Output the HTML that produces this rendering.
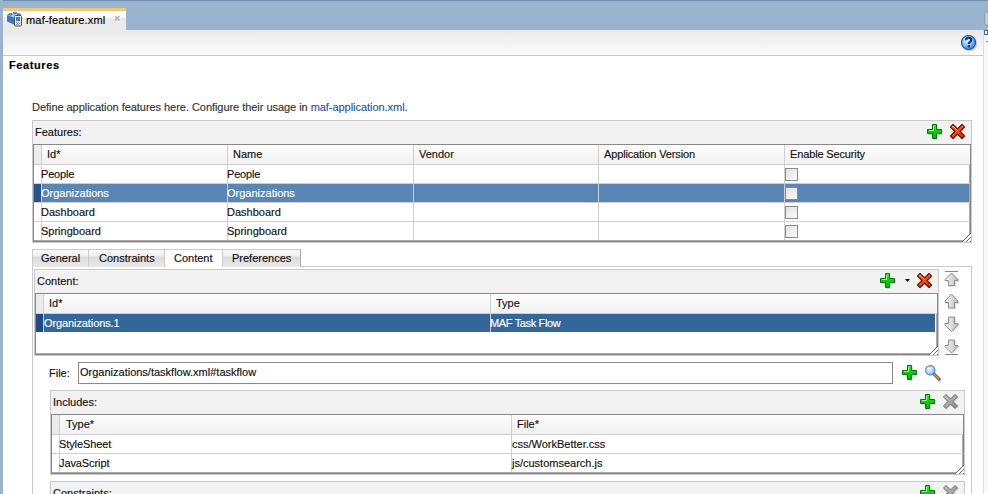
<!DOCTYPE html>
<html><head><meta charset="utf-8">
<style>
*{box-sizing:border-box;margin:0;padding:0}
html,body{width:988px;height:494px;overflow:hidden;background:#fff}
body{position:relative;font-family:"Liberation Sans",sans-serif;font-size:11px;color:#111}
.a{position:absolute}
.t{position:absolute;white-space:nowrap;line-height:13px;height:13px;-webkit-text-stroke:0.15px currentColor}
.t.w{color:#fff}
.hl{background:#c8c8c8}
.dk{background:#8a8a8a}
.gl{background:#cfcfcf}
.cb{width:13px;height:13px;border:1px solid #8a8a8a;background:linear-gradient(135deg,#e2e2e2,#fafafa)}
.tab{height:18px;border:1px solid #cdcdcd;border-right-color:#ababab;border-bottom:none;background:linear-gradient(#f7f7f7 0,#eeeeee 6px,#dcdcdc 7px,#e2e2e2 12px,#e8e8e8 17px)}
</style></head><body>

<!-- top bar -->
<div class="a" style="left:0;top:0;width:988px;height:30px;background:#9ab4cf"></div>
<div class="a" style="left:0;top:0;width:988px;height:1px;background:#7490b0"></div>
<div class="a" style="left:0;top:0;width:3px;height:494px;background:#9ab4cf"></div>

<!-- editor tab -->
<div class="a" style="left:3px;top:8px;width:123px;height:22px;background:linear-gradient(#fff 0,#fff 9px,#ebebeb 10px,#e9e9e9 22px);border-radius:2px 2px 0 0"></div>
<div class="a" style="left:3px;top:8px;width:123px;height:3px;background:#f8c570;border-radius:2px 2px 0 0"></div>
<svg class="a" style="left:6px;top:10px" width="18" height="18" viewBox="0 0 18 18">
  <path d="M1 5 L8 2.5 L15 5 L15 11.5 L8 14.5 L1 11.5 Z" fill="#3b78c4"/>
  <path d="M1 5 L8 7.5 L15 5 L8 2.5 Z" fill="#a8dcf6"/>
  <path d="M8 7.5 L15 5 L15 11.5 L8 14.5Z" fill="#2d64aa"/>
  <ellipse cx="4.5" cy="4.3" rx="1.9" ry="1.3" fill="#3569a8"/>
  <ellipse cx="9" cy="3" rx="1.9" ry="1.3" fill="#3569a8"/>
  <ellipse cx="12.8" cy="4.6" rx="1.9" ry="1.3" fill="#3569a8"/>
  <ellipse cx="4.5" cy="3.8" rx="1.3" ry=".7" fill="#6aa2d8"/>
  <ellipse cx="9" cy="2.5" rx="1.3" ry=".7" fill="#6aa2d8"/>
  <ellipse cx="12.8" cy="4.1" rx="1.3" ry=".7" fill="#6aa2d8"/>
  <rect x="8.5" y="5.5" width="7" height="10.5" rx="1" fill="#e8ecf0" stroke="#505050"/>
  <rect x="10" y="7" width="4" height="4" fill="#3a7ae6"/>
  <path d="M10 12.5h1M12 12.5h1M11 13.5h1M13 13.5h1M10 14.5h1M12 14.5h1" stroke="#8a8a8a" stroke-width="1"/>
</svg>
<div class="t" style="left:26px;top:14px;color:#000;letter-spacing:0.2px">maf-feature.xml</div>
<svg class="a" style="left:114px;top:15px" width="7" height="7" viewBox="0 0 7 7"><path d="M1 1L5.5 5.5M5.5 1L1 5.5" stroke="#a8a8a8" stroke-width="1.1"/></svg>

<!-- toolbar -->
<div class="a" style="left:3px;top:30px;width:980px;height:25px;background:linear-gradient(#e9e9e9,#fbfbfb)"></div>
<div class="a" style="left:3px;top:55px;width:980px;height:1px;background:#c8c8c8"></div>
<svg class="a" style="left:960px;top:34px" width="18" height="18" viewBox="0 0 18 18">
  <defs><radialGradient id="hg" cx="40%" cy="35%" r="70%"><stop offset="0" stop-color="#e8f4ff"/><stop offset="0.5" stop-color="#8cc4f4"/><stop offset="1" stop-color="#2f7fdc"/></radialGradient></defs>
  <circle cx="9" cy="9" r="7.5" fill="#777" opacity=".35" transform="translate(.8,.8)"/>
  <circle cx="8.5" cy="8.5" r="7" fill="url(#hg)" stroke="#1d4fa8" stroke-width="1.2"/>
  <path d="M6 6.3 Q6 3.8 8.6 3.8 Q11.2 3.8 11.2 6.1 Q11.2 7.5 9.6 8.3 Q8.8 8.8 8.8 10" fill="none" stroke="#0e2f7a" stroke-width="2"/>
  <rect x="7.7" y="11.2" width="2.2" height="2.2" fill="#0e2f7a"/>
</svg>

<!-- right strip -->
<div class="a" style="left:983px;top:30px;width:1px;height:464px;background:#dedede"></div>
<div class="a" style="left:984px;top:30px;width:4px;height:464px;background:#f9f9f9"></div>
<div class="a" style="left:984px;top:11px;width:6px;height:15px;background:#c3cad4;border-radius:3px;border:1px solid #8a97a8"></div>
<div class="a" style="left:984px;top:30px;width:4px;height:5px;border:1px solid #3b6ea5;background:#fff"></div>
<div class="a" style="left:986px;top:41px;width:2px;height:1px;background:#888"></div>

<!-- heading -->
<div class="t" style="left:9px;top:59px;font-weight:bold;color:#000;letter-spacing:0.6px">Features</div>
<div class="t" style="left:32px;top:101px;color:#333;letter-spacing:-0.045px">Define application features here. Configure their usage in <span style="color:#2352c4">maf-application.xml.</span></div>


<!-- features panel -->
<div class="a" style="left:32px;top:120px;width:940px;height:123px;background:#f2f2f2;border:1px solid #c9c9c9"></div>
<div class="t" style="left:35px;top:126px">Features:</div>
<svg class="a plus" style="left:927px;top:124px" width="16" height="16" viewBox="0 0 16 16"><use href="#plus"/></svg>
<svg class="a" style="left:950px;top:124px" width="16" height="16" viewBox="0 0 16 16"><use href="#redx"/></svg>

<div class="a" style="left:33px;top:144px;width:938px;height:98px;background:#fff;border:1px solid #888;box-shadow:inset -1px -1px 0 #a9a9a9"></div>
<!-- header -->
<div class="a" style="left:34px;top:145px;width:936px;height:19px;background:linear-gradient(#fdfdfd,#f1f1f1)"></div>
<div class="a" style="left:34px;top:145px;width:7px;height:19px;background:#ececec"></div>
<div class="a gl" style="left:34px;top:164px;width:936px;height:1px"></div>
<div class="a gl" style="left:34px;top:183px;width:936px;height:1px"></div>
<div class="a gl" style="left:34px;top:202px;width:936px;height:1px"></div>
<div class="a gl" style="left:34px;top:221px;width:936px;height:1px"></div>
<!-- selected row -->
<div class="a" style="left:41px;top:184px;width:928px;height:18px;background:#5986b4"></div>
<div class="a" style="left:34px;top:184px;width:7px;height:18px;background:#28518f"></div>
<!-- col separators -->
<div class="a gl" style="left:41px;top:145px;width:1px;height:95px"></div>
<div class="a gl" style="left:227px;top:145px;width:1px;height:95px"></div>
<div class="a gl" style="left:413px;top:145px;width:1px;height:95px"></div>
<div class="a gl" style="left:598px;top:145px;width:1px;height:95px"></div>
<div class="a gl" style="left:784px;top:145px;width:1px;height:95px"></div>
<div class="t" style="left:47px;top:148px">Id*</div>
<div class="t" style="left:233px;top:148px">Name</div>
<div class="t" style="left:419px;top:148px">Vendor</div>
<div class="t" style="left:604px;top:148px;letter-spacing:-0.14px">Application Version</div>
<div class="t" style="left:790px;top:148px;letter-spacing:-0.14px">Enable Security</div>
<div class="t" style="left:41px;top:168px;letter-spacing:-0.2px">People</div>
<div class="t" style="left:227px;top:168px;letter-spacing:-0.2px">People</div>
<div class="t" style="left:41px;top:187px;color:#fff">Organizations</div>
<div class="t" style="left:227px;top:187px;color:#fff">Organizations</div>
<div class="t" style="left:41px;top:206px">Dashboard</div>
<div class="t" style="left:227px;top:206px">Dashboard</div>
<div class="t" style="left:41px;top:225px">Springboard</div>
<div class="t" style="left:227px;top:225px">Springboard</div>
<div class="a cb" style="left:785px;top:168px"></div>
<div class="a cb" style="left:785px;top:187px"></div>
<div class="a cb" style="left:785px;top:206px"></div>
<div class="a cb" style="left:785px;top:225px"></div>
<svg class="a" style="left:961px;top:232px;shape-rendering:crispEdges" width="10" height="10" viewBox="0 0 10 10"><use href="#grip"/></svg>

<!-- sub tabs -->
<div class="a" style="left:32px;top:266px;width:940px;height:228px;background:#fff;border:1px solid #c9c9c9;border-bottom:none"></div>
<div class="a tab" style="left:32px;top:249px;width:57px"></div>
<div class="a tab" style="left:88px;top:249px;width:77px"></div>
<div class="a" style="left:164px;top:249px;width:59px;height:18px;background:#fff;border:1px solid #c9c9c9;border-bottom:none"></div>
<div class="a tab" style="left:222px;top:249px;width:79px"></div>
<div class="t" style="left:41px;top:252px">General</div>
<div class="t" style="left:99px;top:252px">Constraints</div>
<div class="t" style="left:174px;top:252px">Content</div>
<div class="t" style="left:232px;top:252px">Preferences</div>

<!-- content panel -->
<div class="a" style="left:34px;top:269px;width:905px;height:87px;background:#f2f2f2;border:1px solid #c9c9c9"></div>
<div class="t" style="left:37px;top:275px">Content:</div>
<svg class="a" style="left:880px;top:273px" width="16" height="16" viewBox="0 0 16 16"><use href="#plus"/></svg>
<svg class="a" style="left:905px;top:279px" width="6" height="4" viewBox="0 0 6 4"><path d="M0 0H5L2.5 3Z" fill="#111"/></svg>
<svg class="a" style="left:917px;top:273px" width="16" height="16" viewBox="0 0 16 16"><use href="#redx"/></svg>
<div class="a" style="left:35px;top:293px;width:903px;height:62px;background:#fff;border:1px solid #888;box-shadow:inset -1px -1px 0 #a9a9a9"></div>
<div class="a" style="left:36px;top:294px;width:901px;height:19px;background:linear-gradient(#fdfdfd,#f1f1f1)"></div>
<div class="a" style="left:36px;top:294px;width:7px;height:19px;background:#ececec"></div>
<div class="a gl" style="left:36px;top:313px;width:901px;height:1px"></div>
<div class="a" style="left:43px;top:314px;width:892px;height:18px;background:#336699"></div>
<div class="a" style="left:36px;top:314px;width:7px;height:18px;background:#1f4a85"></div>
<div class="a gl" style="left:43px;top:294px;width:1px;height:38px"></div>
<div class="a gl" style="left:490px;top:294px;width:1px;height:38px"></div>
<div class="t" style="left:49px;top:297px">Id*</div>
<div class="t" style="left:496px;top:297px">Type</div>
<div class="t" style="left:44px;top:317px;color:#fff;letter-spacing:-0.1px">Organizations.1</div>
<div class="t" style="left:490px;top:317px;color:#fff;letter-spacing:-0.35px">MAF Task Flow</div>
<svg class="a" style="left:928px;top:345px;shape-rendering:crispEdges" width="10" height="10" viewBox="0 0 10 10"><use href="#grip"/></svg>
<svg class="a" style="left:944px;top:270px" width="17" height="17" viewBox="0 0 17 17"><use href="#atop"/></svg>
<svg class="a" style="left:944px;top:293px" width="17" height="17" viewBox="0 0 17 17"><use href="#aup"/></svg>
<svg class="a" style="left:944px;top:316px" width="17" height="17" viewBox="0 0 17 17"><use href="#adn"/></svg>
<svg class="a" style="left:944px;top:339px" width="17" height="17" viewBox="0 0 17 17"><use href="#abot"/></svg>

<!-- file row -->
<div class="t" style="left:49px;top:367px">File:</div>
<div class="a" style="left:78px;top:362px;width:815px;height:22px;background:#fff;border:1px solid #8a8a8a"></div>
<div class="t" style="left:80px;top:366px">Organizations/taskflow.xml#taskflow</div>
<svg class="a" style="left:902px;top:365px" width="16" height="16" viewBox="0 0 16 16"><use href="#plus"/></svg>
<svg class="a" style="left:924px;top:364px" width="18" height="18" viewBox="0 0 18 18"><use href="#mag"/></svg>

<!-- includes -->
<div class="a" style="left:50px;top:390px;width:915px;height:85px;background:#f2f2f2;border:1px solid #c9c9c9"></div>
<div class="t" style="left:53px;top:396px">Includes:</div>
<svg class="a" style="left:920px;top:394px" width="16" height="16" viewBox="0 0 16 16"><use href="#plus"/></svg>
<svg class="a" style="left:943px;top:394px" width="16" height="16" viewBox="0 0 16 16"><use href="#grayx"/></svg>
<div class="a" style="left:51px;top:414px;width:913px;height:60px;background:#fff;border:1px solid #888;box-shadow:inset -1px -1px 0 #a9a9a9"></div>
<div class="a" style="left:52px;top:415px;width:911px;height:19px;background:linear-gradient(#fdfdfd,#f1f1f1)"></div>
<div class="a" style="left:52px;top:415px;width:7px;height:19px;background:#ececec"></div>
<div class="a gl" style="left:52px;top:434px;width:911px;height:1px"></div>
<div class="a gl" style="left:52px;top:453px;width:911px;height:1px"></div>
<div class="a gl" style="left:59px;top:415px;width:1px;height:57px"></div>
<div class="a gl" style="left:511px;top:415px;width:1px;height:57px"></div>
<div class="t" style="left:66px;top:418px">Type*</div>
<div class="t" style="left:517px;top:418px">File*</div>
<div class="t" style="left:59px;top:438px;letter-spacing:-0.1px">StyleSheet</div>
<div class="t" style="left:512px;top:438px">css/WorkBetter.css</div>
<div class="t" style="left:59px;top:457px;letter-spacing:-0.1px">JavaScript</div>
<div class="t" style="left:512px;top:457px">js/customsearch.js</div>
<svg class="a" style="left:954px;top:464px;shape-rendering:crispEdges" width="10" height="10" viewBox="0 0 10 10"><use href="#grip"/></svg>

<!-- constraints -->
<div class="a" style="left:50px;top:481px;width:915px;height:20px;background:#f2f2f2;border:1px solid #c9c9c9"></div>
<div class="t" style="left:53px;top:487px">Constraints:</div>
<svg class="a" style="left:920px;top:485px" width="16" height="16" viewBox="0 0 16 16"><use href="#plus"/></svg>
<svg class="a" style="left:943px;top:485px" width="16" height="16" viewBox="0 0 16 16"><use href="#grayx"/></svg>

<svg width="0" height="0" style="position:absolute">
<defs>
<linearGradient id="gplus" x1="0" y1="0" x2="0" y2="1"><stop offset="0" stop-color="#40ee40"/><stop offset=".5" stop-color="#00d400"/><stop offset="1" stop-color="#00b800"/></linearGradient>
<linearGradient id="gx" x1="0" y1="0" x2="1" y2="1"><stop offset="0" stop-color="#ff8000"/><stop offset=".5" stop-color="#ff5000"/><stop offset="1" stop-color="#f01800"/></linearGradient>
<linearGradient id="ggx" x1="0" y1="0" x2="1" y2="1"><stop offset="0" stop-color="#c4c4c4"/><stop offset=".5" stop-color="#a8a8a8"/><stop offset="1" stop-color="#888"/></linearGradient>
<linearGradient id="garr" x1="0" y1="0" x2="1" y2="0"><stop offset="0" stop-color="#f2f2f2"/><stop offset=".5" stop-color="#dcdcdc"/><stop offset="1" stop-color="#b4b4b4"/></linearGradient>
<g id="plus">
  <path d="M6.5 1.5H10.5V6.5H15.5V10.5H10.5V15.5H6.5V10.5H1.5V6.5H6.5Z" fill="none" stroke="#000" stroke-opacity=".12" stroke-linejoin="round"/>
  <path d="M5.5 0.5H9.5V5.5H14.5V9.5H9.5V14.5H5.5V9.5H0.5V5.5H5.5Z" fill="url(#gplus)" stroke="#0a6e0a" stroke-width="1" stroke-linejoin="round"/>
  <path d="M6.5 2V6.5H2" fill="none" stroke="#9cff9c" stroke-width="1"/>
</g>
<g id="redx">
  <path d="M1.5 4L4 1.5L8.5 6L13 1.5L15.5 4L11 8.5L15.5 13L13 15.5L8.5 11L4 15.5L1.5 13L6 8.5Z" fill="none" stroke="#000" stroke-opacity=".12" stroke-linejoin="round"/>
  <path d="M0.5 3L3 0.5L7.5 5L12 0.5L14.5 3L10 7.5L14.5 12L12 14.5L7.5 10L3 14.5L0.5 12L5 7.5Z" fill="url(#gx)" stroke="#7a0800" stroke-width="1.15" stroke-linejoin="round"/>
  <path d="M2 3L3 2L7.5 6.5M12 2L13 3" fill="none" stroke="#ffc080" stroke-width=".8"/>
</g>
<g id="grayx">
  <path d="M1.5 4L4 1.5L8.5 6L13 1.5L15.5 4L11 8.5L15.5 13L13 15.5L8.5 11L4 15.5L1.5 13L6 8.5Z" fill="none" stroke="#000" stroke-opacity=".1" stroke-linejoin="round"/>
  <path d="M0.5 3L3 0.5L7.5 5L12 0.5L14.5 3L10 7.5L14.5 12L12 14.5L7.5 10L3 14.5L0.5 12L5 7.5Z" fill="url(#ggx)" stroke="#6a6a6a" stroke-width="1" stroke-linejoin="round"/>
</g>
<g id="grip"><rect x="2" y="9" width="1" height="1" fill="#fff"/><rect x="3" y="8" width="1" height="1" fill="#fff"/><rect x="3" y="9" width="1" height="1" fill="#fff"/><rect x="4" y="7" width="1" height="1" fill="#fff"/><rect x="4" y="8" width="1" height="1" fill="#fff"/><rect x="4" y="9" width="1" height="1" fill="#fff"/><rect x="5" y="6" width="1" height="1" fill="#fff"/><rect x="5" y="7" width="1" height="1" fill="#fff"/><rect x="5" y="8" width="1" height="1" fill="#fff"/><rect x="5" y="9" width="1" height="1" fill="#fff"/><rect x="6" y="5" width="1" height="1" fill="#fff"/><rect x="6" y="6" width="1" height="1" fill="#fff"/><rect x="6" y="7" width="1" height="1" fill="#fff"/><rect x="6" y="8" width="1" height="1" fill="#fff"/><rect x="6" y="9" width="1" height="1" fill="#fff"/><rect x="7" y="4" width="1" height="1" fill="#fff"/><rect x="7" y="5" width="1" height="1" fill="#fff"/><rect x="7" y="6" width="1" height="1" fill="#fff"/><rect x="7" y="7" width="1" height="1" fill="#fff"/><rect x="7" y="8" width="1" height="1" fill="#fff"/><rect x="7" y="9" width="1" height="1" fill="#fff"/><rect x="8" y="3" width="1" height="1" fill="#fff"/><rect x="8" y="4" width="1" height="1" fill="#fff"/><rect x="8" y="5" width="1" height="1" fill="#fff"/><rect x="8" y="6" width="1" height="1" fill="#fff"/><rect x="8" y="7" width="1" height="1" fill="#fff"/><rect x="8" y="8" width="1" height="1" fill="#fff"/><rect x="8" y="9" width="1" height="1" fill="#fff"/><rect x="9" y="2" width="1" height="1" fill="#fff"/><rect x="9" y="3" width="1" height="1" fill="#fff"/><rect x="9" y="4" width="1" height="1" fill="#fff"/><rect x="9" y="5" width="1" height="1" fill="#fff"/><rect x="9" y="6" width="1" height="1" fill="#fff"/><rect x="9" y="7" width="1" height="1" fill="#fff"/><rect x="9" y="8" width="1" height="1" fill="#fff"/><rect x="9" y="9" width="1" height="1" fill="#fff"/><rect x="9" y="1" width="1" height="1" fill="#666"/><rect x="8" y="2" width="1" height="1" fill="#666"/><rect x="7" y="3" width="1" height="1" fill="#666"/><rect x="6" y="4" width="1" height="1" fill="#666"/><rect x="5" y="5" width="1" height="1" fill="#666"/><rect x="4" y="6" width="1" height="1" fill="#666"/><rect x="3" y="7" width="1" height="1" fill="#666"/><rect x="2" y="8" width="1" height="1" fill="#666"/><rect x="1" y="9" width="1" height="1" fill="#666"/><rect x="9" y="5" width="1" height="1" fill="#666"/><rect x="8" y="6" width="1" height="1" fill="#666"/><rect x="7" y="7" width="1" height="1" fill="#666"/><rect x="6" y="8" width="1" height="1" fill="#666"/><rect x="5" y="9" width="1" height="1" fill="#666"/><rect x="9" y="9" width="1" height="1" fill="#666"/></g>
<g id="aup"><path d="M8.5 2L15 9V10.5H11.5V16H5.5V10.5H2V9Z" fill="none" stroke="#000" stroke-opacity=".12" stroke-linejoin="round"/><path d="M7.5 1L14 8V9.5H10.5V15H4.5V9.5H1V8Z" fill="url(#garr)" stroke="#8f8f8f" stroke-linejoin="round"/></g>
<g id="atop"><path d="M1 1.5H14" stroke="#888"/><path d="M8.5 4L15 10.5V11.5H11.5V16.5H5.5V11.5H2V10.5Z" fill="none" stroke="#000" stroke-opacity=".12" stroke-linejoin="round"/><path d="M7.5 3L14 9.5V10.5H10.5V15.5H4.5V10.5H1V9.5Z" fill="url(#garr)" stroke="#8f8f8f" stroke-linejoin="round"/></g>
<g id="adn"><path d="M5.5 2H11.5V8.5H15V10L8.5 16.5L2 10V8.5H5.5Z" fill="none" stroke="#000" stroke-opacity=".12" stroke-linejoin="round"/><path d="M4.5 1H10.5V7.5H14V9L7.5 15.5L1 9V7.5H4.5Z" fill="url(#garr)" stroke="#8f8f8f" stroke-linejoin="round"/></g>
<g id="abot"><path d="M1 15.5H14" stroke="#888"/><path d="M5.5 2H11.5V7.5H15V8.5L8.5 15L2 8.5V7.5H5.5Z" fill="none" stroke="#000" stroke-opacity=".12" stroke-linejoin="round"/><path d="M4.5 1H10.5V6.5H14V7.5L7.5 14L1 7.5V6.5H4.5Z" fill="url(#garr)" stroke="#8f8f8f" stroke-linejoin="round"/></g>
<g id="mag">
  <path d="M10 10L15.2 15.2" stroke="#000" stroke-opacity=".15" stroke-width="3.2" stroke-linecap="round" transform="translate(.6,.6)"/>
  <path d="M10 10L15.2 15.2" stroke="#8a4320" stroke-width="3" stroke-linecap="round"/>
  <path d="M10.3 10.3L15 15" stroke="#d0b0a0" stroke-width="1.1" stroke-linecap="round" stroke-dasharray="1 .6"/>
  <circle cx="6.3" cy="6.3" r="4.7" fill="url(#gmag)" stroke="#4f86cc" stroke-width="1.1"/>
</g>
<radialGradient id="gmag" cx="38%" cy="35%" r="65%"><stop offset="0" stop-color="#ffffff"/><stop offset=".45" stop-color="#c4defa"/><stop offset="1" stop-color="#86b6ea"/></radialGradient>
</defs></svg>

</body></html>
